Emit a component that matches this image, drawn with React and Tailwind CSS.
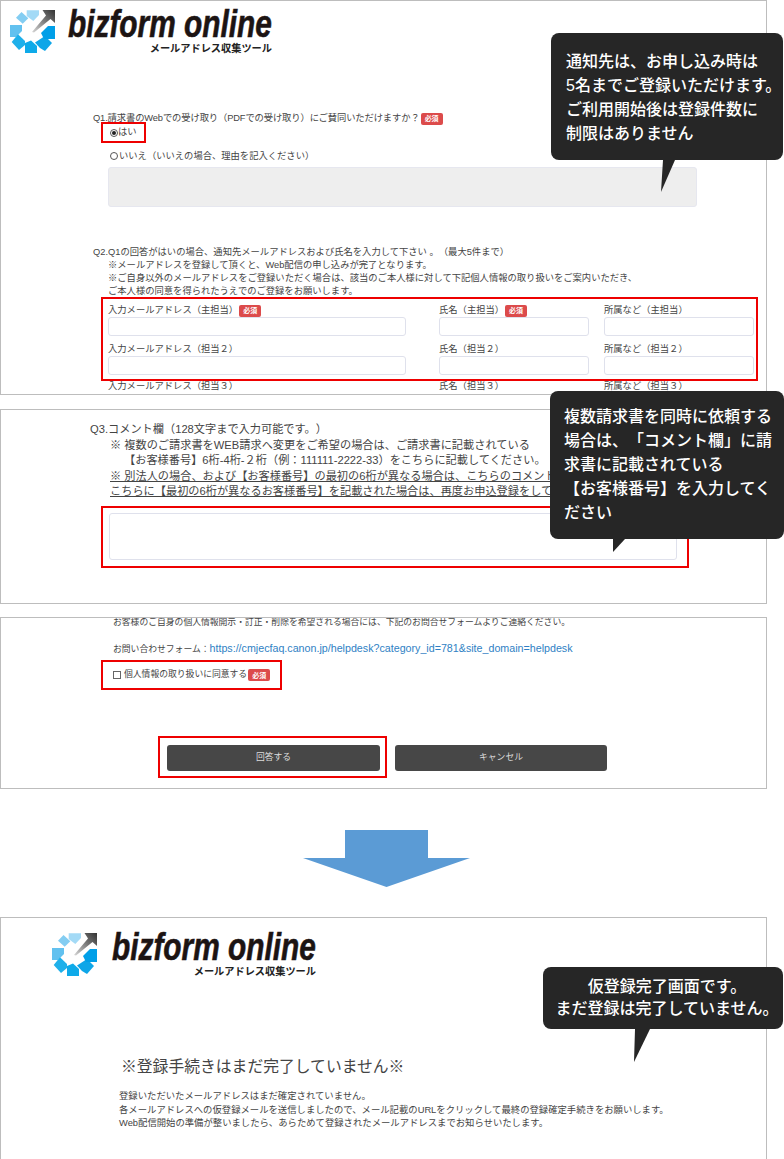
function Logo({ textGap }) {
  return (
    <div className="flex items-start">
      <svg className="w-[47px] h-[45px] shrink-0" viewBox="9 8 47 45">
        <defs>
          <linearGradient id="arrow" x1="0" y1="1" x2="1" y2="0">
            <stop offset="0" stopColor="#d8d8d8" />
            <stop offset="0.55" stopColor="#777777" />
            <stop offset="1" stopColor="#333333" />
          </linearGradient>
        </defs>
        <polygon fill="#a3daf6" points="26.7,9.3 39,9.3 39,14 33.3,20 26.7,15" />
        <polygon fill="#83cdf2" points="16,16.7 21.5,11 28.3,17.3 22.7,22.7" />
        <polygon fill="#62c1ef" points="10,24 22,24 22,30 16,36 10,36" />
        <polygon fill="#1fb0ea" points="11.7,41 18,33.3 25,40 25,44 19,49" />
        <polygon fill="#0eaae9" points="25,42 31,39.5 37,45 37,52 25,52" />
        <polygon fill="#0ea6e8" points="35,41.5 45,35 52,42 45,50 40,47" />
        <polygon fill="#009fe8" points="41,32 48,25 55,25 55,38 44,38" />
        <polygon fill="url(#arrow)" points="32,31 46,14.5 42.5,9 55,9 55,22 50.5,18 34,31.5" />
      </svg>
      <div className={`${textGap} w-[204px] flex flex-col items-end`}>
        <div className="w-full h-[32px] -mt-[1px] text-[38px] leading-[32px] font-bold italic text-[#1c1413] [-webkit-text-stroke:0.6px_#1c1413] whitespace-nowrap scale-x-[0.785] origin-left">
          bizform online
        </div>
        <div className="mt-[3px] text-[10.2px] leading-[12px] font-bold text-[#222222] whitespace-nowrap">
          メールアドレス収集ツール
        </div>
      </div>
    </div>
  );
}

function Required() {
  return (
    <span className="inline-flex items-center justify-center w-[22px] h-[12px] ml-[1px] rounded-[2px] bg-[#dc4b4b] text-white text-[7px] font-bold leading-none align-middle">
      必須
    </span>
  );
}

function Field({ label, required, width }) {
  return (
    <div className={width}>
      <div className="h-[14px] leading-[14px] whitespace-nowrap">
        {label}
        {required && <Required />}
      </div>
      <div className="h-[19px] bg-white border border-[#dfe1ec] rounded-[3px]" />
    </div>
  );
}

function Row({ who, required }) {
  return (
    <div className="flex">
      <Field label={`入力メールアドレス（${who}）`} required={required} width="w-[298px]" />
      <Field label={`氏名（${who}）`} required={required} width="w-[150px] ml-[33px]" />
      <Field label={`所属など（${who}）`} width="w-[150px] ml-[15px]" />
    </div>
  );
}

function Callout({ className, tail, children }) {
  return (
    <div className={`absolute bg-[#262626] rounded-[8px] text-white text-[16px] font-medium ${className}`}>
      {children}
      <svg className={`absolute top-full ${tail.className}`} viewBox={tail.box}>
        <polygon fill="#262626" points={tail.points} />
      </svg>
    </div>
  );
}

export default function App() {
  return (
    <div className="relative w-[784px] h-[1159px] bg-white overflow-hidden font-['Liberation_Sans','Noto_Sans_CJK_JP',sans-serif] [text-spacing-trim:space-all] text-[#444444]">
      <div className="w-[767px]">
        <section className="h-[395px] border border-[#bdbdbd] overflow-hidden text-[9.3px]">
          <div className="pl-[8px] pt-[8px]">
            <Logo textGap="ml-[12px]" />
          </div>
          <div className="ml-[92px] mt-[56px] h-[14px] leading-[14px] tracking-[-0.12px] whitespace-nowrap">
            Q1.請求書のWebでの受け取り（PDFでの受け取り）にご賛同いただけますか？
            <Required />
          </div>
          <div className="ml-[100px] mt-[-3px] w-[45px] h-[21px] border-2 border-[#ee0000] pl-[7px] flex items-center">
            <span className="w-[8px] h-[8px] rounded-full border border-[#555555] flex items-center justify-center">
              <span className="w-[4px] h-[4px] rounded-full bg-[#222222]" />
            </span>
            はい
          </div>
          <div className="ml-[109px] mt-[6px] h-[14px] leading-[14px] whitespace-nowrap flex items-center">
            <span className="w-[8px] h-[8px] rounded-full border border-[#555555] mr-[1px]" />
            いいえ（いいえの場合、理由を記入ください）
          </div>
          <div className="ml-[107px] mt-[4px] w-[589px] h-[40px] bg-[#eeeeee] border border-[#e6e7ef] rounded-[3px]" />
          <div className="ml-[92px] mt-[39px] leading-[13px] whitespace-nowrap">
            <div>Q2.Q1の回答がはいの場合、通知先メールアドレスおよび氏名を入力して下さい 。（最大5件まで）</div>
            <div className="ml-[15px]">※メールアドレスを登録して頂くと、Web配信の申し込みが完了となります。</div>
            <div className="ml-[15px]">※ご自身以外のメールアドレスをご登録いただく場合は、該当のご本人様に対して下記個人情報の取り扱いをご案内いただき、</div>
            <div className="ml-[15px]">ご本人様の同意を得られたうえでのご登録をお願いします。</div>
          </div>
          <div className="ml-[100px] mt-[-1px] w-[657px] h-[84px] border-2 border-[#ee0000] pl-[5px] pt-[4px] flex flex-col gap-[6px]">
            <Row who="主担当" required />
            <Row who="担当２" />
          </div>
          <div className="ml-[107px] mt-[-2px] flex">
            <div className="w-[298px] h-[14px] leading-[14px]">入力メールアドレス（担当３）</div>
            <div className="w-[150px] ml-[33px] leading-[14px]">氏名（担当３）</div>
            <div className="w-[150px] ml-[15px] leading-[14px]">所属など（担当３）</div>
          </div>
        </section>

        <section className="h-[195px] mt-[14px] border border-[#bdbdbd] overflow-hidden text-[11.2px] leading-[15.5px] whitespace-nowrap">
          <div className="ml-[89px] mt-[12px]">Q3.コメント欄（128文字まで入力可能です。）</div>
          <div className="ml-[109px]">※ 複数のご請求書をWEB請求へ変更をご希望の場合は、ご請求書に記載されている</div>
          <div className="ml-[123px]">【お客様番号】6桁-4桁-２桁（例：111111-2222-33）をこちらに記載してください。</div>
          <div className="ml-[109px] underline">※ 別法人の場合、および【お客様番号】の最初の6桁が異なる場合は、こちらのコメント欄</div>
          <div className="ml-[109px] underline">こちらに【最初の6桁が異なるお客様番号】を記載された場合は、再度お申込登録をして</div>
          <div className="ml-[100px] mt-[6px] w-[588px] h-[62px] border-2 border-[#ee0000] pl-[6px] pt-[5px]">
            <div className="w-[568px] h-[47px] border border-[#dfe1ec] rounded-[3px]" />
          </div>
        </section>

        <section className="h-[172px] mt-[13px] border border-[#bdbdbd] overflow-hidden text-[8.8px] whitespace-nowrap">
          <div className="ml-[112px] mt-[-3px] h-[14px] leading-[14px]">お客様のご自身の個人情報開示・訂正・削除を希望される場合には、下記のお問合せフォームよりご連絡ください。</div>
          <div className="ml-[112px] mt-[12px] h-[14px] leading-[14px]">
            お問い合わせフォーム：<span className="text-[10.7px] text-[#2f7fc4]">https://cmjecfaq.canon.jp/helpdesk?category_id=781&amp;site_domain=helpdesk</span>
          </div>
          <div className="ml-[100px] mt-[5px] w-[181px] h-[30px] border-2 border-[#ee0000] pl-[10px] flex items-center">
            <span className="w-[8px] h-[8px] border border-[#666666] mr-[3px]" />
            個人情報の取り扱いに同意する
            <Required />
          </div>
          <div className="ml-[157px] mt-[46px] flex items-center">
            <div className="w-[229px] h-[42px] border-2 border-[#ee0000] pl-[7px] pt-[7px]">
              <div className="w-[213px] h-[26px] rounded-[3px] bg-[#474747] text-[#dddddd] flex items-center justify-center">回答する</div>
            </div>
            <div className="ml-[8px] w-[212px] h-[26px] mt-[2px] rounded-[3px] bg-[#474747] text-[#dddddd] flex items-center justify-center">キャンセル</div>
          </div>
        </section>

        <div className="mt-[41px] ml-[303px] w-[167px] h-[57px]">
          <svg className="w-full h-full" viewBox="0 0 167 57">
            <polygon fill="#5b9bd5" points="42,0 125,0 125,28 167,28 83.5,57 0,28 42,28" />
          </svg>
        </div>

        <section className="h-[243px] mt-[30px] border border-[#bdbdbd] overflow-hidden whitespace-nowrap">
          <div className="pl-[50px] pt-[14px]">
            <Logo textGap="ml-[14px]" />
          </div>
          <div className="ml-[120px] mt-[79px] text-[15.8px] leading-[20px]">※登録手続きはまだ完了していません※</div>
          <div className="ml-[118px] mt-[13px] text-[9.35px] leading-[13.5px]">
            <div>登録いただいたメールアドレスはまだ確定されていません。</div>
            <div>各メールアドレスへの仮登録メールを送信しましたので、メール記載のURLをクリックして最終の登録確定手続きをお願いします。</div>
            <div>Web配信開始の準備が整いましたら、あらためて登録されたメールアドレスまでお知らせいたします。</div>
          </div>
        </section>
      </div>

      <Callout
        className="left-[551px] top-[33px] w-[232px] h-[127px] pl-[15px] pt-[17px] leading-[24px] whitespace-nowrap"
        tail={{ className: 'left-[110px] w-[14px] h-[32px]', box: '0 0 14 32', points: '2,0 14,0 0,32' }}
      >
        通知先は、お申し込み時は
        <br />
        5名までご登録いただけます。
        <br />
        ご利用開始後は登録件数に
        <br />
        制限はありません
      </Callout>
      <Callout
        className="left-[550px] top-[391px] w-[234px] h-[148px] pl-[14px] pt-[14px] leading-[24px]"
        tail={{ className: 'left-[63px] w-[12px] h-[13px]', box: '0 0 12 13', points: '0,0 12,0 0,13' }}
      >
        複数請求書を同時に依頼する
        <br />
        場合は、「コメント欄」に請
        <br />
        求書に記載されている
        <br />
        【お客様番号】を入力してく
        <br />
        ださい
      </Callout>
      <Callout
        className="left-[543px] top-[967px] w-[240px] h-[62px] pt-[9px] pl-[8px] text-center leading-[22px] whitespace-nowrap"
        tail={{ className: 'left-[91px] w-[16px] h-[33px]', box: '0 0 16 33', points: '1,0 16,0 0,33' }}
      >
        仮登録完了画面です。
        <br />
        まだ登録は完了していません。
      </Callout>
    </div>
  );
}
